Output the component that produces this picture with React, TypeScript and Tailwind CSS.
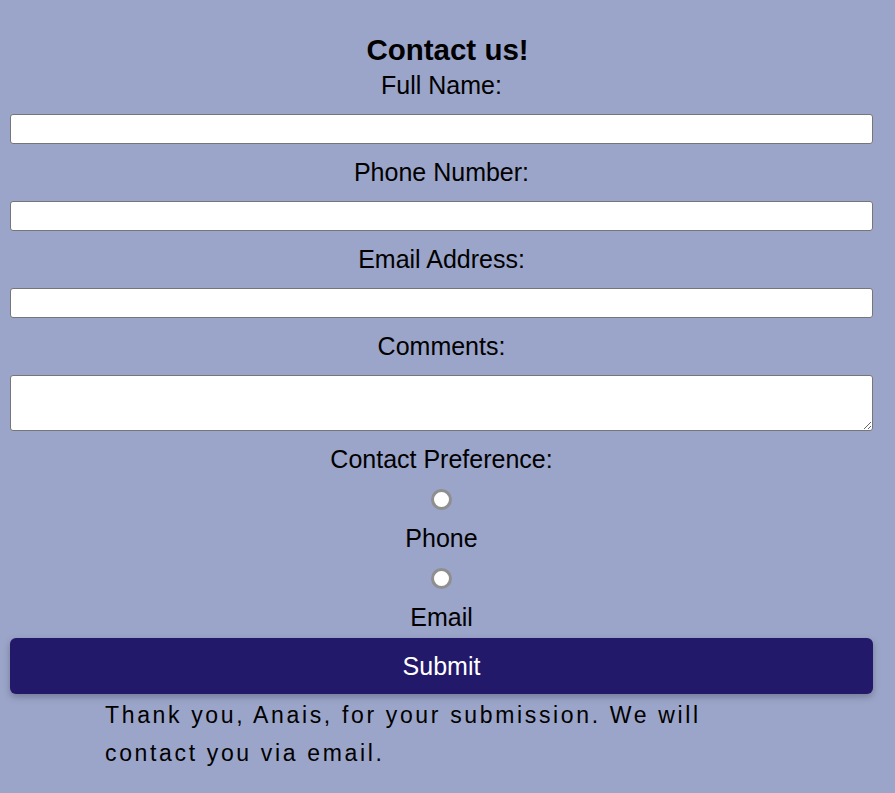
import React from "react";

export default function App() {
  const label =
    "block text-center text-[25px] leading-[29px] font-['Liberation_Sans',Arial,sans-serif]";
  const input =
    "block w-full h-[30px] bg-white border border-[#767676] rounded-[3px] outline-none";
  const radio =
    "appearance-none block w-[21px] h-[21px] rounded-full bg-white border-[3px] border-[#8f8f8f] m-0";
  return (
    <div className="min-h-screen bg-[#9ba5c9] text-black font-['Liberation_Sans',Arial,sans-serif] overflow-hidden">
      <h3 className="pt-[36px] text-center text-[29.5px] font-bold leading-[28px]">
        Contact us!
      </h3>
      <form
        className="ml-[10px] w-[863px] flex flex-col"
        onSubmit={(e) => e.preventDefault()}
      >
        <label className={`${label} mt-[7px] mb-[14px]`}>Full Name:</label>
        <input type="text" className={input} />
        <label className={`${label} mt-[14px] mb-[14px]`}>Phone Number:</label>
        <input type="tel" className={input} />
        <label className={`${label} mt-[14px] mb-[14px]`}>Email Address:</label>
        <input type="email" className={input} />
        <label className={`${label} mt-[14px] mb-[14px]`}>Comments:</label>
        <textarea className="block w-full h-[56px] bg-white border border-[#767676] rounded-[3px] outline-none" />
        <label className={`${label} mt-[14px]`}>Contact Preference:</label>
        <div className="flex flex-col items-center">
          <input type="radio" name="pref" className={`${radio} mt-[15px]`} />
          <span className={`${label} mt-[14px]`}>Phone</span>
          <input type="radio" name="pref" className={`${radio} mt-[15px]`} />
          <span className={`${label} mt-[14px]`}>Email</span>
        </div>
        <button
          type="submit"
          className="mt-[6px] h-[56px] w-full rounded-[6px] bg-[#23196b] text-white text-[25px] leading-[29px] shadow-[0_3px_7px_rgba(0,0,0,0.25)]"
        >
          Submit
        </button>
      </form>
      <p className="ml-[105px] mt-[2px] w-[640px] text-[23px] leading-[38px] tracking-[2.65px]">
        Thank you, Anais, for your submission. We will contact you via email.
      </p>
    </div>
  );
}
